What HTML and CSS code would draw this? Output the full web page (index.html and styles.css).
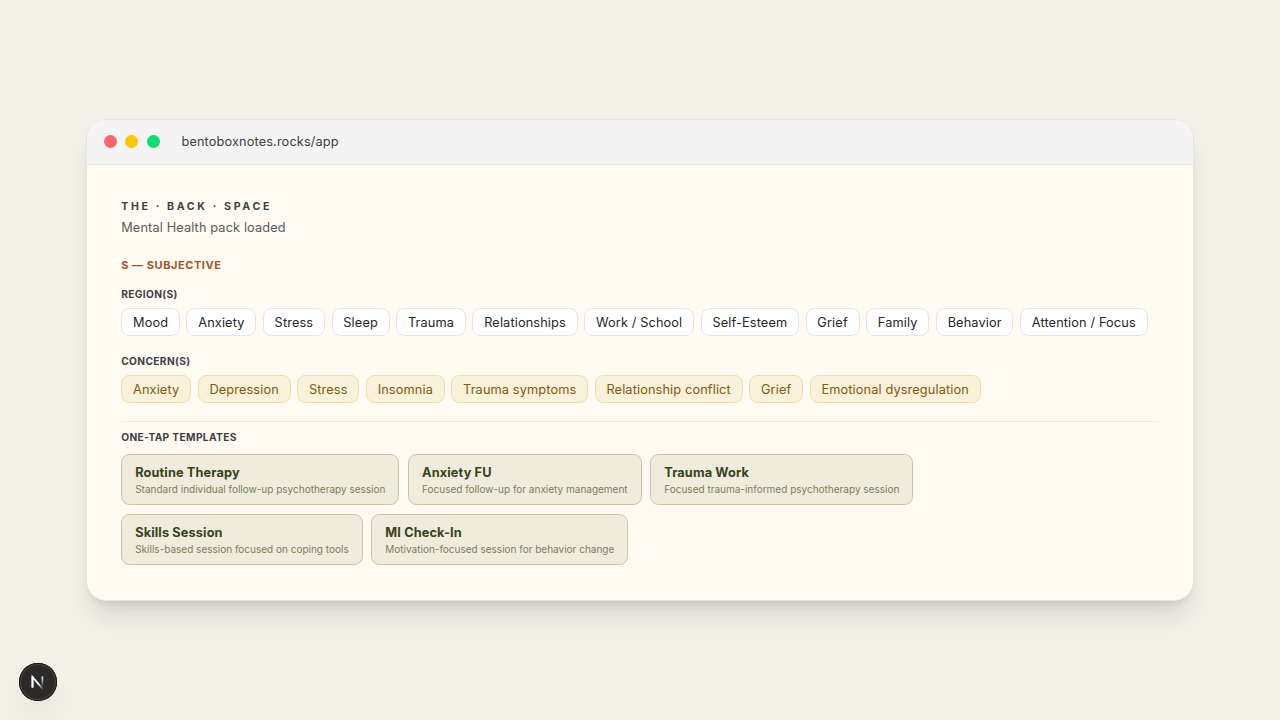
FILE: index.html
```html
<!DOCTYPE html>
<html lang="en">

<head>
    <meta charset="UTF-8">
    <title>Bento Box Notes</title>
    <link rel="stylesheet" href="styles.css">
</head>

<body>
    <div class="window">
        <div class="titlebar">
            <span class="dot dot-red"></span>
            <span class="dot dot-yellow"></span>
            <span class="dot dot-green"></span>
            <span class="url">bentoboxnotes.rocks/app</span>
        </div>

        <div class="content">
            <div class="brand">THE · BACK · SPACE</div>
            <div class="pack">Mental Health pack loaded</div>

            <div class="section-title">S — SUBJECTIVE</div>

            <div class="label">REGION(S)</div>
            <div class="chips">
                <span class="chip">Mood</span>
                <span class="chip">Anxiety</span>
                <span class="chip">Stress</span>
                <span class="chip">Sleep</span>
                <span class="chip">Trauma</span>
                <span class="chip">Relationships</span>
                <span class="chip">Work / School</span>
                <span class="chip">Self-Esteem</span>
                <span class="chip">Grief</span>
                <span class="chip">Family</span>
                <span class="chip">Behavior</span>
                <span class="chip">Attention / Focus</span>
            </div>

            <div class="label label-concerns">CONCERN(S)</div>
            <div class="chips">
                <span class="chip chip-amber">Anxiety</span>
                <span class="chip chip-amber">Depression</span>
                <span class="chip chip-amber">Stress</span>
                <span class="chip chip-amber">Insomnia</span>
                <span class="chip chip-amber">Trauma symptoms</span>
                <span class="chip chip-amber">Relationship conflict</span>
                <span class="chip chip-amber">Grief</span>
                <span class="chip chip-amber">Emotional dysregulation</span>
            </div>

            <div class="templates-section">
                <div class="label">ONE-TAP TEMPLATES</div>
                <div class="templates">
                    <div class="template">
                        <div class="template-name">Routine Therapy</div>
                        <div class="template-desc">Standard individual follow-up psychotherapy session</div>
                    </div>
                    <div class="template">
                        <div class="template-name">Anxiety FU</div>
                        <div class="template-desc">Focused follow-up for anxiety management</div>
                    </div>
                    <div class="template">
                        <div class="template-name">Trauma Work</div>
                        <div class="template-desc">Focused trauma-informed psychotherapy session</div>
                    </div>
                    <div class="template">
                        <div class="template-name">Skills Session</div>
                        <div class="template-desc">Skills-based session focused on coping tools</div>
                    </div>
                    <div class="template">
                        <div class="template-name">MI Check-In</div>
                        <div class="template-desc">Motivation-focused session for behavior change</div>
                    </div>
                </div>
            </div>
        </div>
    </div>

    <div class="dev-badge">
        <svg width="38" height="38" viewBox="0 0 38 38" fill="none">
            <defs>
                <linearGradient id="diagonal" x1="20" y1="20" x2="25" y2="26" gradientUnits="userSpaceOnUse">
                    <stop stop-color="#fff"/>
                    <stop offset="1" stop-color="#fff" stop-opacity="0"/>
                </linearGradient>
                <linearGradient id="stem" x1="24" y1="13" x2="24" y2="24" gradientUnits="userSpaceOnUse">
                    <stop stop-color="#fff"/>
                    <stop offset="1" stop-color="#fff" stop-opacity="0"/>
                </linearGradient>
            </defs>
            <path d="M13.5 24.5V14L23.8 26.2" stroke="url(#diagonal)" stroke-width="1.8"/>
            <path d="M13.5 24.5V13.6" stroke="#fff" stroke-width="1.8"/>
            <path d="M23.4 13.5V23.5" stroke="url(#stem)" stroke-width="1.7"/>
        </svg>
    </div>
</body>

</html>
```

FILE: styles.css
```css
html {
    font-size: 17px;
}

html,
body {
    height: 100%;
    margin: 0;
}

body {
    font-family: Inter, sans-serif;
    background: #f3f0e8;
    display: flex;
    justify-content: center;
    align-items: center;
    overflow: hidden;
}

.window {
    width: 1108px;
    height: 482px;
    box-sizing: border-box;
    border: 1px solid #e4e4e7;
    border-radius: 20px;
    background: #fffbf2;
    overflow: hidden;
    box-shadow: 0 20px 25px -5px rgba(0, 0, 0, 0.1), 0 8px 10px -6px rgba(0, 0, 0, 0.1);
}

.titlebar {
    display: flex;
    align-items: center;
    gap: 8.4px;
    height: 43.5px;
    padding: 0 17px;
    background: #f4f4f5;
    border-bottom: 1px solid #e4e4e7;
}

.dot {
    width: 13px;
    height: 13px;
    border-radius: 50%;
}

.dot-red {
    background: #ff6467;
}

.dot-yellow {
    background: #fdc700;
}

.dot-green {
    background: #05df72;
}

.url {
    margin-left: 13.3px;
    font-size: 0.75rem;
    letter-spacing: 0.01em;
    color: #3f3f46;
}

.content {
    padding: 34px 34.2px;
}

.brand {
    font-size: 10.6px;
    line-height: 16px;
    font-weight: 700;
    letter-spacing: 0.25em;
    color: #3f3f46;
}

.pack {
    margin-top: 4px;
    font-size: 0.75rem;
    line-height: 17px;
    letter-spacing: 0.01em;
    color: #5a5a62;
}

.section-title {
    margin-top: 21px;
    font-size: 11px;
    line-height: 17px;
    font-weight: 700;
    letter-spacing: 0.05em;
    color: #a8532e;
}

.label {
    margin: 13px 0 6px;
    font-size: 10.2px;
    line-height: 15px;
    font-weight: 700;
    letter-spacing: 0.035em;
    color: #3f3f46;
}

.label-concerns {
    margin-top: 18px;
}

.chips {
    display: flex;
    flex-wrap: wrap;
    gap: 6.5px;
}

.chip {
    padding: 5px 10.8px 4px;
    font-size: 0.75rem;
    line-height: 17px;
    letter-spacing: 0.01em;
    color: #27272a;
    background: #fff;
    border: 1px solid #e4e4e7;
    border-radius: 0.5rem;
}

.chip-amber {
    color: #7a5c14;
    background: #faf1da;
    border-color: #efdcab;
}

.templates-section {
    margin-top: 18px;
    border-top: 1px solid #efebe4;
}

.templates-section .label {
    margin: 8px 0 9px;
}

.templates {
    display: flex;
    flex-wrap: wrap;
    gap: 9px 8.6px;
}

.template {
    padding: 9px 13px 8px;
    background: #f0ecdd;
    border: 1px solid #c6c7a8;
    border-radius: 0.5rem;
}

.template-name {
    font-size: 0.75rem;
    line-height: 17px;
    font-weight: 700;
    letter-spacing: 0.01em;
    color: #37421a;
}

.template-desc {
    margin-top: 1px;
    font-size: 10px;
    line-height: 14px;
    color: #7a7d5c;
}

/* floating dev tools button */
.dev-badge {
    position: absolute;
    left: 19px;
    bottom: 19px;
    width: 38px;
    height: 38px;
    border-radius: 50%;
    background: #2b2a29;
    box-shadow: inset 0 0 0 1px #171717, inset 0 0 0 2px #484746, 0 16px 32px -8px rgba(0, 0, 0, 0.12);
}
```
